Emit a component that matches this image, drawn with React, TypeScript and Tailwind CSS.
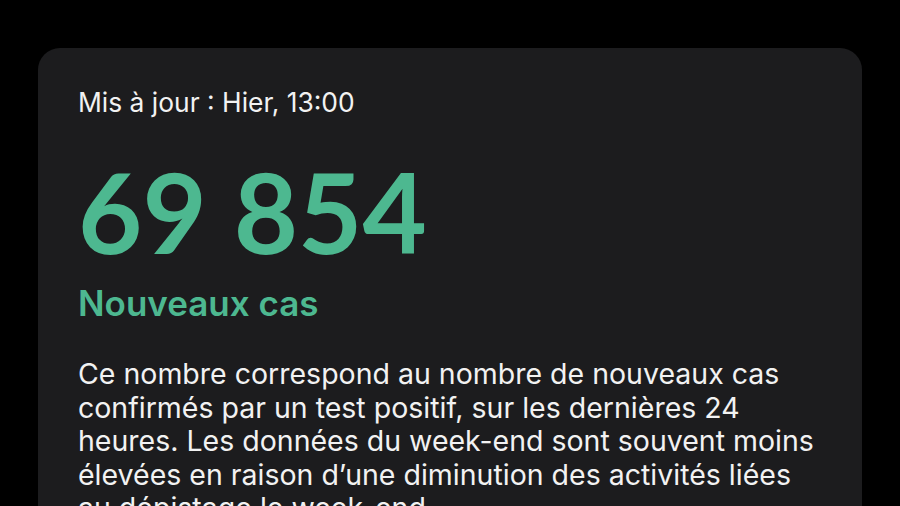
export default function App() {
  return (
    <div className="w-[900px] h-[506px] overflow-hidden bg-black pt-[48px] px-[38px]">
      <div className="h-[520px] rounded-[22px] bg-[#1c1c1e] px-[40px] pt-[38px]">
        <p className="text-[26.4px] leading-[32px] text-[#f2f2f2] font-['Inter',sans-serif]">
          Mis à jour : Hier, 13:00
        </p>
        <p className="mt-[43px] text-[111px] leading-[100px] font-bold text-[#4db890] font-['Lato',sans-serif]">
          69 854
        </p>
        <p className="mt-[22px] text-[35px] leading-[40px] font-semibold text-[#4db890] font-['Inter',sans-serif]">
          Nouveaux cas
        </p>
        <p className="mt-[34px] w-[744px] text-[28.5px] leading-[33.5px] text-[#f2f2f2] font-['Inter',sans-serif]">
          Ce nombre correspond au nombre de nouveaux cas confirmés par un test positif, sur les dernières 24 heures. Les données du week-end sont souvent moins élevées en raison d’une diminution des activités liées au dépistage le week-end.
        </p>
      </div>
    </div>
  )
}
